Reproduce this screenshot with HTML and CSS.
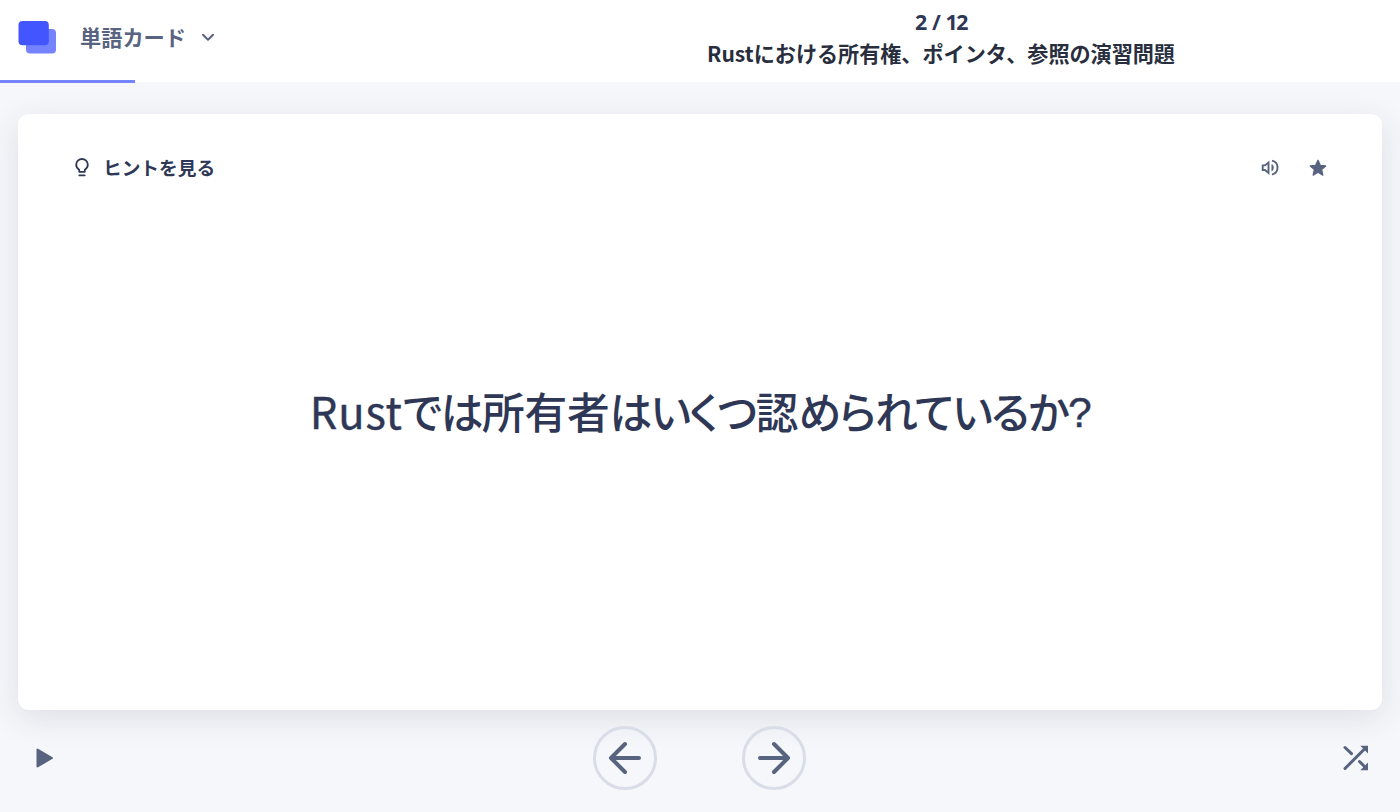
FILE: index.html
```
<!DOCTYPE html>
<html lang="ja">
<head>
    <meta charset="utf-8">
    <title>単語カード</title>
    <link rel="stylesheet" href="styles.css">
</head>
<body>
    <header class="header">
        <button class="mode" type="button">
            <svg class="logo" width="38" height="33" viewBox="0 0 38 33">
                <rect x="8" y="8" width="30" height="24.5" rx="4" fill="#7583ff"/>
                <rect x="0.5" y="0" width="30.3" height="24.3" rx="4" fill="#4255ff"/>
            </svg>
            <span class="mode-name">単語カード</span>
            <svg class="chevron" width="14" height="10" viewBox="0 0 14 10">
                <path d="M2 2.7l5 5 5-5" fill="none" stroke="#586380" stroke-width="2" stroke-linecap="round" stroke-linejoin="round"/>
            </svg>
        </button>
        <div class="set-info">
            <div class="count">2 / 12</div>
            <h1 class="set-title">Rustにおける所有権、ポインタ、参照の演習問題</h1>
        </div>
        <div class="progress"></div>
    </header>

    <main class="card">
        <div class="card-top">
            <button class="hint" type="button">
                <svg width="16" height="20" viewBox="0 0 16 20" fill="none" stroke="#2e3856" stroke-width="1.8">
                    <path d="M5.2 13.8v-2C3.4 10.700 2.200 9 2.200 6.800a5.800 5.800 0 0 1 11.600 0c0 2.200-1.200 3.900-3 5v2z" stroke-linejoin="round"/>
                    <path d="M5.300 17.300h5.400" stroke-linecap="round"/>
                </svg>
                <span class="hint-text">ヒントを見る</span>
            </button>
            <div class="card-actions">
                <svg width="18" height="18" viewBox="0 0 18 18" fill="none" stroke="#586380" stroke-width="1.9">
                    <path d="M1.700 6.400h2.300l3.500-2.900v10.400l-3.500-2.900H1.700z"/>
                    <path d="M11 1.600a7.200 7.200 0 0 1 0 14"/>
                    <path d="M10.500 5c3 1.200 3 6.200 0 7.400z" fill="#586380" stroke="none"/>
                </svg>
                <svg width="18" height="18" viewBox="0 0 18 18">
                    <path d="M9 1.300l2.300 5 5.400.6-4.100 3.700 1.200 5.500L9 13.300l-4.800 2.800 1.200-5.500-4.100-3.700 5.400-.6z" fill="#586380" stroke="#586380" stroke-width="1.300" stroke-linejoin="round"/>
                </svg>
            </div>
        </div>
        <p class="question"><span class="latin">Rust</span>では<span class="kanji">所有者</span>はいくつ<span class="kanji">認</span>められているか<span class="mark">?</span></p>
    </main>

    <footer class="controls">
        <svg class="play" width="18" height="20" viewBox="0 0 18 20">
            <path d="M1.500 1.500v17L16 10z" fill="#586380" stroke="#586380" stroke-width="2" stroke-linejoin="round"/>
        </svg>
        <div class="nav">
            <button class="nav-button" type="button">
                <svg width="34" height="34" viewBox="0 0 34 34">
                    <path d="M31 17H3M17 3L3 17l14 14"/>
                </svg>
            </button>
            <button class="nav-button" type="button">
                <svg width="34" height="34" viewBox="0 0 34 34">
                    <path d="M3 17h28M17 3l14 14-14 14"/>
                </svg>
            </button>
        </div>
        <svg class="shuffle" width="26" height="26" viewBox="0 0 26 26" fill="none" stroke="#586380" stroke-width="3" stroke-linecap="round">
            <path d="M2 2.500l6.500 6.200M2 23.500L21 4.500M16.500 16.500l5 5"/>
            <path d="M17.300 .8H25v7.700zM25 17.500v7.700h-7.700z" fill="#586380" stroke="none"/>
        </svg>
    </footer>
</body>
</html>
```

FILE: styles.css
```
* {
    box-sizing: border-box;
}

body {
    margin: 0;
    height: 812px;
    display: flex;
    flex-direction: column;
    overflow: hidden;
    background-color: #f6f7fb;
    color: #2e3856;
    font-family: "Noto Sans", "Noto Sans CJK JP", sans-serif;
}

button {
    margin: 0;
    padding: 0;
    border: none;
    background: none;
    color: inherit;
    font-family: inherit;
    cursor: pointer;
}

.header {
    position: relative;
    height: 82px;
    flex: none;
    display: flex;
    background-color: #fff;
}

.mode {
    display: flex;
    align-items: center;
    width: 482px;
    height: 74px;
    padding-left: 18px;
}

.mode-name {
    margin-left: 24px;
    color: #586380;
    font-family: "Noto Sans CJK JP", sans-serif;
    font-size: 21.2px;
    font-weight: 700;
    line-height: 32px;
}

.chevron {
    margin-left: 15px;
}

.set-info {
    flex: 1;
    padding-top: 6px;
    text-align: center;
}

.count {
    font-family: "Open Sans", sans-serif;
    font-size: 21.3px;
    font-weight: 700;
    line-height: 31px;
    letter-spacing: -1.4px;
    word-spacing: 2px;
}

.set-title {
    margin: 0;
    color: #282e3e;
    font-family: "Noto Sans CJK JP", sans-serif;
    font-size: 21.1px;
    font-weight: 700;
    line-height: 32px;
}

.progress {
    position: absolute;
    left: 0;
    bottom: -1px;
    width: 135px;
    height: 3px;
    background-color: #7583ff;
}

.card {
    flex: none;
    display: flex;
    flex-direction: column;
    height: 596px;
    margin: 32px 18px 0;
    border-radius: 11px;
    background-color: #fff;
    box-shadow: 0 8px 32px rgba(40, 46, 62, 0.12);
}

.card-top {
    display: flex;
    justify-content: space-between;
    align-items: center;
    height: 107px;
    padding: 0 55px 0 56px;
}

.hint {
    display: flex;
    align-items: center;
    gap: 13px;
}

.hint-text {
    margin-top: -2px;
    font-family: "Noto Sans CJK JP", sans-serif;
    font-size: 18.7px;
    font-weight: 700;
    line-height: 28px;
}

.card-actions {
    display: flex;
    gap: 30px;
}

.question {
    margin: 0;
    padding-top: 157px;
    font-family: "Noto Sans CJK JP", sans-serif;
    font-size: 42.7px;
    font-weight: 500;
    line-height: 64px;
    letter-spacing: -1.5px;
    text-align: center;
    white-space: nowrap;
    font-feature-settings: "palt";
}

.kanji {
    letter-spacing: -0.2px;
}

.latin {
    font-size: 43.5px;
    font-weight: 400;
    letter-spacing: 0.8px;
    -webkit-text-stroke: 0.4px #2e3856;
}

.mark {
    font-family: "Liberation Sans", sans-serif;
    font-weight: 400;
    line-height: 1;
    vertical-align: 2px;
    -webkit-text-stroke: 0.4px #2e3856;
}

.controls {
    flex: 1;
    display: flex;
    justify-content: space-between;
    align-items: center;
    padding: 0 31px 7px 36px;
}

.nav {
    display: flex;
    gap: 85px;
    margin-left: 2px;
}

.nav-button {
    display: flex;
    align-items: center;
    justify-content: center;
    width: 64px;
    height: 64px;
    border: 3px solid #d9dde8;
    border-radius: 50%;
}

.nav-button path {
    fill: none;
    stroke: #586380;
    stroke-width: 4;
    stroke-linecap: round;
    stroke-linejoin: round;
}
```
